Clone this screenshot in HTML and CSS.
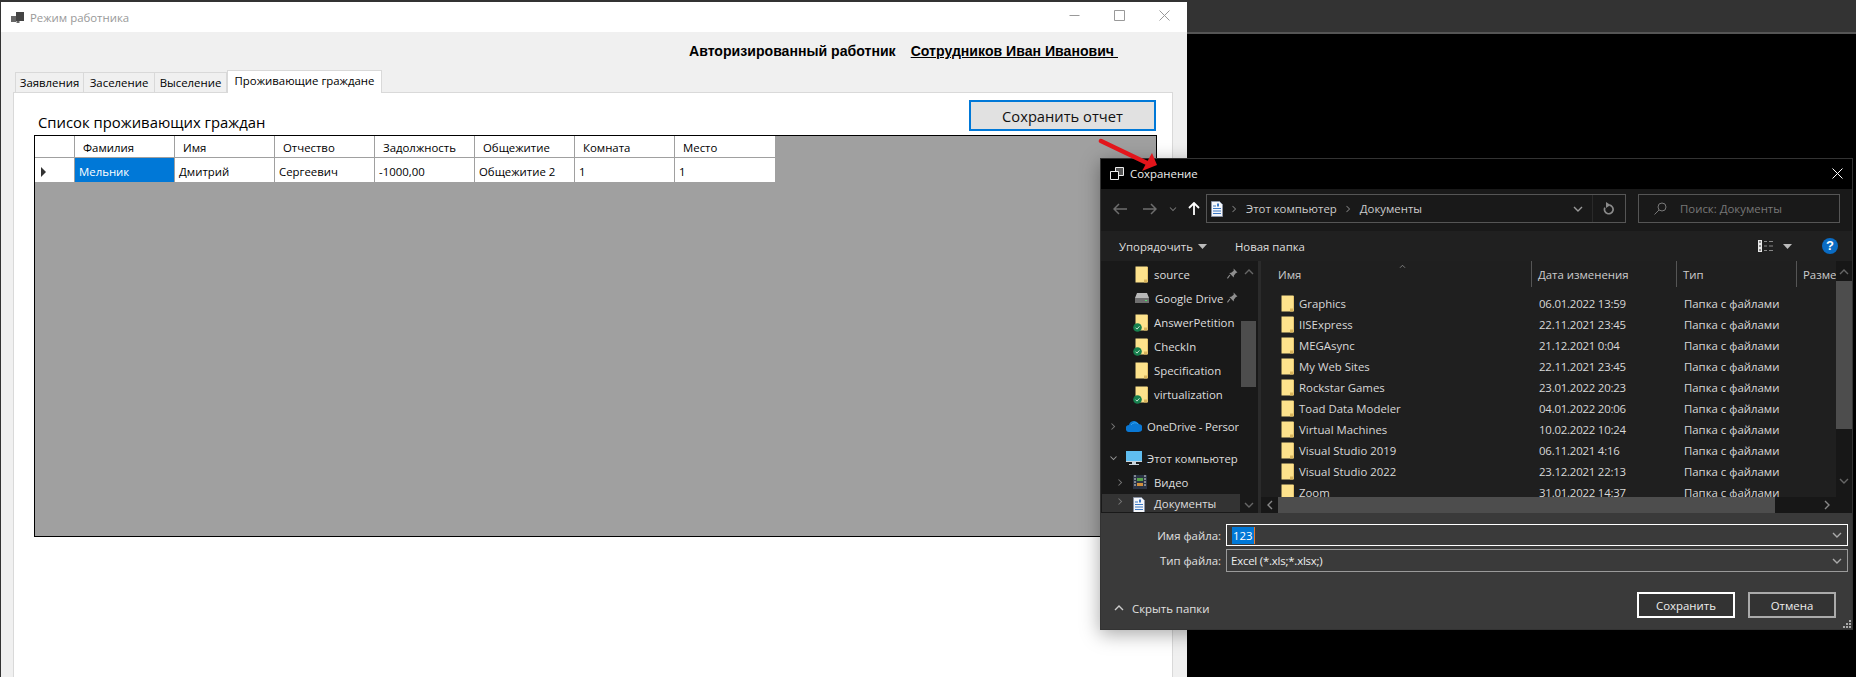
FILE: index.html
```html
<!DOCTYPE html>
<html lang="ru">
<head>
    <meta charset="UTF-8">
    <title>Режим работника</title>
    <link rel="stylesheet" href="styles.css">
</head>
<body>
    <svg class="defs" width="0" height="0">
        <symbol id="folder" viewBox="0 0 13 17">
            <path d="M0.500 0.500h12v16h-12z" fill="#fde28c"/>
            <path d="M9 16.500v-3h3.500v3z" fill="#d8b45c"/>
            <path d="M12.500 1v15" stroke="#e6c46e" fill="none"/>
        </symbol>
        <symbol id="sync" viewBox="0 0 9 9">
            <circle cx="4.500" cy="4.500" r="4.300" fill="#17804e"/>
            <path d="M2.600 4.700l1.400 1.400 2.500-2.800" stroke="#d5ecdf" stroke-width="0.900" fill="none"/>
        </symbol>
        <symbol id="doc" viewBox="0 0 12 16">
            <path d="M0.500 0.500h8l3 3v12h-11z" fill="#f4f6fa" stroke="#8a93a5"/>
            <path d="M2 5h3M2 7.500h8M2 10h8M2 12.500h8" stroke="#3b78c4"/>
            <path d="M6 2.500h2v3h-2z" fill="#3b78c4"/>
        </symbol>
        <symbol id="pin" viewBox="0 0 10 10">
            <path d="M6 0.500l3.500 3.500-1.400.6-1.800 2.300-.2 1.700-4-4 1.700-.2 2.300-1.800z" fill="#8f8f8f"/>
            <path d="M2.600 6.400l-2.200 3" stroke="#8f8f8f" fill="none"/>
        </symbol>
        <symbol id="chev-right" viewBox="0 0 8 10">
            <path d="M2 1l4 4-4 4" stroke="currentColor" stroke-width="1.400" fill="none"/>
        </symbol>
        <symbol id="chev-left" viewBox="0 0 8 10">
            <path d="M6 1l-4 4 4 4" stroke="currentColor" stroke-width="1.400" fill="none"/>
        </symbol>
        <symbol id="chev-down" viewBox="0 0 10 8">
            <path d="M1 2l4 4 4-4" stroke="currentColor" stroke-width="1.400" fill="none"/>
        </symbol>
        <symbol id="chev-up" viewBox="0 0 10 8">
            <path d="M1 6l4-4 4 4" stroke="currentColor" stroke-width="1.400" fill="none"/>
        </symbol>
        <symbol id="caret" viewBox="0 0 9 5">
            <path d="M0 0h9l-4.500 5z" fill="currentColor"/>
        </symbol>
    </svg>

    <div class="topbar"></div>

    <!-- окно приложения -->
    <div class="window">
        <div class="win-title">
            <svg class="win-icon" width="13" height="11" viewBox="0 0 13 11">
                <path d="M5 0h8v9h-8z" fill="#444"/>
                <path d="M0 4h5v6h-5z" fill="#666"/>
                <path d="M5.500 9h3v2h-3z" fill="#666"/>
            </svg>
            <span class="win-name">Режим работника</span>
            <div class="win-controls">
                <svg width="11" height="11" viewBox="0 0 11 11"><path d="M0.500 5.500h10" stroke="#999"/></svg>
                <svg width="11" height="11" viewBox="0 0 11 11"><path d="M0.500 0.500h10v10h-10z" stroke="#999" fill="none"/></svg>
                <svg width="11" height="11" viewBox="0 0 11 11"><path d="M0.500 0.500l10 10M10.500 0.500l-10 10" stroke="#999" fill="none"/></svg>
            </div>
        </div>
        <div class="win-body">
            <div class="user-row">
                <span class="user-label">Авторизированный работник</span>
                <span class="user-name">Сотрудников Иван Иванович&nbsp;</span>
            </div>
            <div class="tabs">
                <div class="tab tab-1">Заявления</div>
                <div class="tab tab-2">Заселение</div>
                <div class="tab tab-3">Выселение</div>
                <div class="tab tab-active">Проживающие граждане</div>
            </div>
            <div class="panel">
                <div class="panel-head">
                    <span class="panel-label">Список проживающих граждан</span>
                    <button class="save-report">Сохранить отчет</button>
                </div>
                <div class="grid-view">
                    <div class="grid-table">
                        <div class="cell head corner"></div>
                        <div class="cell head">Фамилия</div>
                        <div class="cell head">Имя</div>
                        <div class="cell head">Отчество</div>
                        <div class="cell head">Задолжность</div>
                        <div class="cell head">Общежитие</div>
                        <div class="cell head">Комната</div>
                        <div class="cell head">Место</div>
                        <div class="cell row-marker"><span class="marker"></span></div>
                        <div class="cell selected">Мельник</div>
                        <div class="cell">Дмитрий</div>
                        <div class="cell">Сергеевич</div>
                        <div class="cell">-1000,00</div>
                        <div class="cell">Общежитие 2</div>
                        <div class="cell">1</div>
                        <div class="cell">1</div>
                    </div>
                </div>
            </div>
        </div>
    </div>

    <!-- диалог сохранения -->
    <div class="dialog">
        <div class="dlg-title">
            <svg class="dlg-icon" width="14" height="13" viewBox="0 0 14 13">
                <path d="M5.500 0.500h8v8h-8z" stroke="#eee" fill="#555"/>
                <path d="M0.500 4.500h8v8h-8z" stroke="#eee" fill="#000"/>
            </svg>
            <span>Сохранение</span>
            <svg class="dlg-close" width="11" height="11" viewBox="0 0 11 11"><path d="M0.500 0.500l10 10M10.500 0.500l-10 10" stroke="#fff" fill="none"/></svg>
        </div>

        <div class="nav-row">
            <svg class="nav-back" width="14" height="12" viewBox="0 0 14 12"><path d="M6 1l-5 5 5 5M1 6h13" stroke="#6d6d6d" stroke-width="1.500" fill="none"/></svg>
            <svg class="nav-forward" width="14" height="12" viewBox="0 0 14 12"><path d="M8 1l5 5-5 5M0 6h13" stroke="#6d6d6d" stroke-width="1.500" fill="none"/></svg>
            <svg class="nav-drop" width="8" height="6"><use href="#chev-down"/></svg>
            <svg class="nav-up" width="12" height="13" viewBox="0 0 12 13"><path d="M1 6l5-5 5 5M6 1v12" stroke="#fff" stroke-width="1.800" fill="none"/></svg>
            <div class="address">
                <svg class="addr-doc" width="12" height="16"><use href="#doc"/></svg>
                <svg class="addr-chev" width="6" height="8"><use href="#chev-right"/></svg>
                <span>Этот компьютер</span>
                <svg class="addr-chev" width="6" height="8"><use href="#chev-right"/></svg>
                <span>Документы</span>
                <svg class="addr-drop" width="10" height="8"><use href="#chev-down"/></svg>
                <div class="addr-refresh">
                    <svg width="12" height="13" viewBox="0 0 12 13"><path d="M6.500 3.200a4.300 4.300 0 1 1-4.600 2.400" stroke="#8a8a8a" stroke-width="1.700" fill="none"/><path d="M3 0l4.500 3-4.500 3z" fill="#8a8a8a"/></svg>
                </div>
            </div>
            <div class="search">
                <svg width="13" height="13" viewBox="0 0 13 13"><circle cx="8" cy="5" r="4" stroke="#777" fill="none"/><path d="M5 8l-4.500 4.500" stroke="#777" fill="none"/></svg>
                <span>Поиск: Документы</span>
            </div>
        </div>

        <div class="tool-row">
            <span class="tool-sort">Упорядочить</span>
            <svg class="tool-caret" width="9" height="5"><use href="#caret"/></svg>
            <span class="tool-new">Новая папка</span>
            <svg class="tool-view" width="16" height="12" viewBox="0 0 16 12">
                <path d="M0 0h4v12h-4z" fill="#e8e8e8"/>
                <path d="M1 2h2M1 6h2M1 10h2" stroke="#333"/>
                <path d="M6 1.500h3M11 1.500h4M6 6h3M11 6h4M6 10.500h3M11 10.500h4" stroke="#888"/>
            </svg>
            <svg class="tool-caret tool-caret-view" width="9" height="5"><use href="#caret"/></svg>
            <span class="help">?</span>
        </div>

        <div class="main">
            <div class="tree-pane">
                <div class="tree">
                    <div class="tree-row sub"><svg class="ti" width="13" height="17"><use href="#folder"/></svg><span>source</span><svg class="pin" width="11" height="11"><use href="#pin"/></svg></div>
                    <div class="tree-row sub">
                        <svg class="ti" width="14" height="10" viewBox="0 0 14 10"><path d="M2 0h10l2 5v5h-14v-5z" fill="#b9b9b9"/><path d="M0 5h14v5h-14z" fill="#6f6f6f"/><path d="M10 7h2v1h-2z" fill="#4fdc6a"/></svg>
                        <span>Google Drive</span><svg class="pin" width="11" height="11"><use href="#pin"/></svg>
                    </div>
                    <div class="tree-row sub"><span class="ti badged"><svg width="13" height="17"><use href="#folder"/></svg><svg class="badge" width="9" height="9"><use href="#sync"/></svg></span><span>AnswerPetition</span></div>
                    <div class="tree-row sub"><span class="ti badged"><svg width="13" height="17"><use href="#folder"/></svg><svg class="badge" width="9" height="9"><use href="#sync"/></svg></span><span>CheckIn</span></div>
                    <div class="tree-row sub"><svg class="ti" width="13" height="17"><use href="#folder"/></svg><span>Specification</span></div>
                    <div class="tree-row sub"><span class="ti badged"><svg width="13" height="17"><use href="#folder"/></svg><svg class="badge" width="9" height="9"><use href="#sync"/></svg></span><span>virtualization</span></div>
                    <div class="tree-row top gap">
                        <svg class="exp" width="6" height="9"><use href="#chev-right"/></svg>
                        <svg class="ti-top" width="16" height="11" viewBox="0 0 16 11"><path d="M3.500 11a3.500 3.500 0 0 1-.5-7 5 5 0 0 1 9.500-1 4 4 0 0 1 0 8z" fill="#0a78d4"/><path d="M5 4a5 5 0 0 1 7.500-1" stroke="#35a4ee" fill="none"/></svg>
                        <span class="clip">OneDrive - Persor</span>
                    </div>
                    <div class="tree-row top gap">
                        <svg class="exp-down" width="9" height="6"><use href="#chev-down"/></svg>
                        <svg class="ti-top" width="16" height="14" viewBox="0 0 16 14"><path d="M0 0h16v10h-16z" fill="#5fbdf0"/><path d="M0 10h16v1h-16zM6 11h4v2h-4zM3 13h10v1h-10z" fill="#c9d3da"/></svg>
                        <span>Этот компьютер</span>
                    </div>
                    <div class="tree-row sub2">
                        <svg class="exp" width="6" height="9"><use href="#chev-right"/></svg>
                        <svg class="ti2" width="14" height="14" viewBox="0 0 14 14"><path d="M0 0h14v14h-14z" fill="#2b3445"/><path d="M4 3h6v3h-6z" fill="#58a24b"/><path d="M4 8h6v3h-6z" fill="#d18f3c"/><path d="M1 1h2M1 4h2M1 7h2M1 10h2M11 1h2M11 4h2M11 7h2M11 10h2" stroke="#ddd"/></svg>
                        <span>Видео</span>
                    </div>
                    <div class="tree-row sub2 current">
                        <svg class="exp" width="6" height="9"><use href="#chev-right"/></svg>
                        <svg class="ti2" width="12" height="16"><use href="#doc"/></svg>
                        <span>Документы</span>
                    </div>
                </div>
                <div class="scroll-v tree-scroll">
                    <svg width="10" height="8"><use href="#chev-up"/></svg>
                    <div class="thumb-slot"><div class="thumb"></div></div>
                    <svg width="10" height="8"><use href="#chev-down"/></svg>
                </div>
            </div>
            <div class="list-pane">
                <div class="list-inner">
                    <div class="list-head">
                        <span class="sort-mark"><svg width="9" height="5"><use href="#chev-up"/></svg></span>
                        <div class="col-name">Имя</div>
                        <div class="col-date">Дата изменения</div>
                        <div class="col-type">Тип</div>
                        <div class="col-size">Разме</div>
                    </div>
                    <div class="files">
                        <div class="file"><span class="f-name"><svg width="13" height="17"><use href="#folder"/></svg>Graphics</span><span class="f-date">06.01.2022 13:59</span><span class="f-type">Папка с файлами</span></div>
                        <div class="file"><span class="f-name"><svg width="13" height="17"><use href="#folder"/></svg>IISExpress</span><span class="f-date">22.11.2021 23:45</span><span class="f-type">Папка с файлами</span></div>
                        <div class="file"><span class="f-name"><svg width="13" height="17"><use href="#folder"/></svg>MEGAsync</span><span class="f-date">21.12.2021 0:04</span><span class="f-type">Папка с файлами</span></div>
                        <div class="file"><span class="f-name"><svg width="13" height="17"><use href="#folder"/></svg>My Web Sites</span><span class="f-date">22.11.2021 23:45</span><span class="f-type">Папка с файлами</span></div>
                        <div class="file"><span class="f-name"><svg width="13" height="17"><use href="#folder"/></svg>Rockstar Games</span><span class="f-date">23.01.2022 20:23</span><span class="f-type">Папка с файлами</span></div>
                        <div class="file"><span class="f-name"><svg width="13" height="17"><use href="#folder"/></svg>Toad Data Modeler</span><span class="f-date">04.01.2022 20:06</span><span class="f-type">Папка с файлами</span></div>
                        <div class="file"><span class="f-name"><svg width="13" height="17"><use href="#folder"/></svg>Virtual Machines</span><span class="f-date">10.02.2022 10:24</span><span class="f-type">Папка с файлами</span></div>
                        <div class="file"><span class="f-name"><svg width="13" height="17"><use href="#folder"/></svg>Visual Studio 2019</span><span class="f-date">06.11.2021 4:16</span><span class="f-type">Папка с файлами</span></div>
                        <div class="file"><span class="f-name"><svg width="13" height="17"><use href="#folder"/></svg>Visual Studio 2022</span><span class="f-date">23.12.2021 22:13</span><span class="f-type">Папка с файлами</span></div>
                        <div class="file"><span class="f-name"><svg width="13" height="17"><use href="#folder"/></svg>Zoom</span><span class="f-date">31.01.2022 14:37</span><span class="f-type">Папка с файлами</span></div>
                    </div>
                    <div class="scroll-h">
                        <svg width="8" height="10"><use href="#chev-left"/></svg>
                        <div class="h-slot"><div class="h-thumb"></div></div>
                        <svg width="8" height="10"><use href="#chev-right"/></svg>
                    </div>
                </div>
                <div class="scroll-v list-scroll">
                    <svg width="10" height="8"><use href="#chev-up"/></svg>
                    <div class="thumb-slot"><div class="thumb"></div></div>
                    <svg width="10" height="8"><use href="#chev-down"/></svg>
                </div>
            </div>
        </div>

        <div class="bottom">
            <div class="field">
                <label>Имя файла:</label>
                <div class="combo combo-focus"><span class="sel">123</span><span class="text-caret"></span><svg width="10" height="8"><use href="#chev-down"/></svg></div>
            </div>
            <div class="field">
                <label>Тип файла:</label>
                <div class="combo"><span class="type-value">Excel (*.xls;*.xlsx;)</span><svg width="10" height="8"><use href="#chev-down"/></svg></div>
            </div>
            <div class="actions">
                <div class="hide-folders"><svg width="10" height="8"><use href="#chev-up"/></svg><span>Скрыть папки</span></div>
                <button class="dlg-btn dlg-default">Сохранить</button>
                <button class="dlg-btn">Отмена</button>
            </div>
            <svg class="grip" width="9" height="9" viewBox="0 0 9 9"><path d="M6 0h2v2h-2zM3 3h2v2h-2zM6 3h2v2h-2zM0 6h2v2h-2zM3 6h2v2h-2zM6 6h2v2h-2z" fill="#aaa"/></svg>
        </div>
    </div>

    <!-- красная стрелка поверх скриншота -->
    <svg class="arrow" width="70" height="36" viewBox="0 0 70 36">
        <path d="M3 3l46 22" stroke="#e3151b" stroke-width="4.500" stroke-linecap="round" fill="none"/>
        <path d="M59 27l-5-12-10 18z" fill="#e3151b"/>
    </svg>
</body>
</html>
```

FILE: styles.css
```css
* {
    box-sizing: border-box;
}

html, body {
    margin: 0;
    height: 100%;
}

body {
    position: relative;
    overflow: hidden;
    background-color: #000;
    font-family: "Open Sans", "Noto Sans", sans-serif;
    font-size: 11.4px;
    color: #000;
}

.defs {
    position: absolute;
}

.topbar {
    height: 34px;
    background-color: #333;
    border-bottom: 2px solid #555;
}

button {
    font-family: inherit;
    padding: 0;
}

/* Окно приложения */
.window {
    position: absolute;
    left: 0;
    top: 2px;
    width: 1187px;
    height: 690px;
    border-left: 1px solid #333;
    display: flex;
    flex-direction: column;
    background-color: #f0f0f0;
}

.win-title {
    height: 30px;
    flex-shrink: 0;
    background-color: #fff;
    display: flex;
    align-items: center;
    padding-left: 10px;
}

.win-icon {
    margin-right: 6px;
}

.win-name {
    color: #999;
}

.win-controls {
    margin-left: auto;
    display: flex;
    gap: 34px;
    margin-right: 17px;
    margin-top: -4px;
}

.win-body {
    flex: 1;
    display: flex;
    flex-direction: column;
    padding-left: 12px;
    padding-right: 14px;
}

.user-row {
    height: 37px;
    padding-top: 12px;
    padding-left: 676px;
    display: flex;
    gap: 15px;
    font-family: "Liberation Sans", sans-serif;
    font-weight: bold;
    font-size: 14.1px;
    line-height: 15px;
    white-space: nowrap;
}

.user-name {
    text-decoration: underline;
}

.tabs {
    display: flex;
    align-items: flex-end;
    height: 23px;
    padding-left: 2px;
}

.tab {
    height: 20px;
    background-color: #f0f0f0;
    border: 1px solid #d9d9d9;
    border-bottom: none;
    border-left: none;
    text-align: center;
    line-height: 19px;
    white-space: nowrap;
}

.tab-1 {
    width: 69px;
    border-left: 1px solid #d9d9d9;
}

.tab-2 {
    width: 71px;
}

.tab-3 {
    width: 72px;
}

.tab-active {
    width: 155px;
    height: 23px;
    background-color: #fff;
    line-height: 20px;
    border-left: 1px solid #d9d9d9;
    margin-bottom: -1px;
    position: relative;
    z-index: 1;
}

.panel {
    flex: 1;
    background-color: #fff;
    border: 1px solid #d9d9d9;
    padding: 7px 16px 0 20px;
}

.panel-head {
    display: flex;
    justify-content: space-between;
    height: 35px;
}

.panel-label {
    font-size: 14.85px;
    line-height: 20px;
    margin-top: 12px;
    margin-left: 4px;
}

.save-report {
    width: 187px;
    height: 31px;
    background-color: #e1e1e1;
    border: 2px solid #0078d7;
    font-size: 14.7px;
    color: #111;
}

.grid-view {
    width: 1123px;
    height: 402px;
    background-color: #a0a0a0;
    border: 1px solid #000;
}

.grid-table {
    display: grid;
    grid-template-columns: 40px repeat(7, 100px);
    grid-template-rows: 22px 25px;
    width: 740px;
}

.cell {
    background-color: #fff;
    border-right: 1px solid #a0a0a0;
    border-bottom: 1px solid #a0a0a0;
    padding-left: 4px;
    line-height: 27px;
    white-space: nowrap;
}

.cell:nth-child(8n) {
    border-right: none;
}

.cell.head {
    line-height: 23px;
    padding-left: 8px;
}

.cell.head.corner {
    padding: 0;
}

.row-marker {
    position: relative;
    padding: 0;
}

.marker {
    position: absolute;
    left: 6px;
    top: 9px;
    border-left: 5px solid #333;
    border-top: 5px solid transparent;
    border-bottom: 5px solid transparent;
}

.cell.selected {
    background-color: #0078d7;
    color: #fff;
}

/* Диалог сохранения */
.dialog {
    position: absolute;
    left: 1100px;
    top: 158px;
    width: 753px;
    height: 472px;
    background-color: #1a1a1a;
    border: 1px solid #333;
    box-shadow: 0 4px 18px rgba(0, 0, 0, 0.35);
    display: flex;
    flex-direction: column;
    color: #ddd;
}

.dlg-title {
    height: 30px;
    flex-shrink: 0;
    background-color: #000;
    color: #eee;
    display: flex;
    align-items: center;
    padding-left: 9px;
    padding-bottom: 2px;
}

.dlg-icon {
    margin-right: 6px;
}

.dlg-close {
    margin-left: auto;
    margin-right: 9px;
}

.nav-row {
    height: 42px;
    flex-shrink: 0;
    display: flex;
    align-items: center;
    background-color: #191919;
    color: #777;
    padding-bottom: 3px;
}

.nav-back {
    margin-left: 12px;
}

.nav-forward {
    margin-left: 16px;
}

.nav-drop {
    margin-left: 12px;
}

.nav-up {
    margin-left: 11px;
}

.address {
    margin-left: 6px;
    width: 420px;
    height: 29px;
    border: 1px solid #555;
    display: flex;
    align-items: center;
    color: #ccc;
}

.addr-doc {
    margin-left: 4px;
}

.addr-chev {
    margin: 0 9px 0 8px;
    color: #777;
}

.addr-drop {
    margin-left: auto;
    color: #999;
    margin-right: 9px;
}

.addr-refresh {
    width: 33px;
    height: 100%;
    border-left: 1px solid #2a2a2a;
    display: flex;
    align-items: center;
    justify-content: center;
}

.search {
    margin-left: 12px;
    width: 202px;
    height: 29px;
    border: 1px solid #555;
    display: flex;
    align-items: center;
    padding-left: 15px;
    gap: 13px;
    color: #777;
}

.tool-row {
    height: 30px;
    flex-shrink: 0;
    display: flex;
    align-items: center;
    background-color: #202020;
    color: #ddd;
}

.tool-sort {
    margin-left: 18px;
}

.tool-caret {
    color: #bbb;
    margin-left: 5px;
}

.tool-new {
    margin-left: 28px;
}

.tool-view {
    margin-left: auto;
}

.tool-caret-view {
    margin-left: 9px;
}

.help {
    width: 16px;
    height: 16px;
    margin: 0 14px 0 30px;
    border-radius: 50%;
    background-color: #0a6cc4;
    color: #fff;
    font-family: "Liberation Sans", sans-serif;
    font-weight: bold;
    font-size: 13px;
    line-height: 16px;
    text-align: center;
}

.main {
    flex: 1;
    min-height: 0;
    display: flex;
    background-color: #1f1f1f;
}

.tree-pane {
    width: 160px;
    flex-shrink: 0;
    display: flex;
    background-color: #191919;
    border-right: 3px solid #2b2b2b;
}

.tree {
    width: 139px;
    padding-top: 1px;
    overflow: hidden;
}

.tree-row {
    height: 24px;
    display: flex;
    align-items: center;
    white-space: nowrap;
    position: relative;
}

.tree-row.sub {
    padding-left: 34px;
}

.tree-row.sub2 {
    padding-left: 16px;
}

.tree-row.top {
    padding-left: 9px;
}

.tree-row.sub:nth-child(6) {
    margin-bottom: 8px;
}

.tree-row.top:nth-child(7) {
    margin-bottom: 8px;
}

.tree-row.current {
    background-color: #333;
    margin-left: 1px;
    padding-left: 15px;
    height: 18px;
    align-items: flex-start;
    overflow: hidden;
}

.tree-row.current > span,
.tree-row.current > svg {
    margin-top: 3px;
}

.tree-row.current > span {
    margin-top: 2px;
    margin-left: 2px;
}

.ti {
    margin-right: 6px;
    flex-shrink: 0;
}

.badged {
    position: relative;
    width: 13px;
    height: 17px;
    display: block;
}

.badged svg {
    display: block;
}

.badge {
    position: absolute;
    left: -2px;
    bottom: -1px;
}

.pin {
    position: absolute;
    left: 126px;
    top: 6px;
}

.exp {
    color: #777;
    margin-right: 10px;
}

.exp-down {
    color: #999;
    margin-right: 8px;
    margin-left: -1px;
}

.ti-top {
    margin-right: 5px;
}

.ti2 {
    margin-right: 7px;
}

.clip {
    overflow: hidden;
    letter-spacing: -0.15px;
}

.scroll-v {
    width: 15px;
    display: flex;
    flex-direction: column;
    align-items: center;
    color: #666;
    padding: 7px 0 4px;
}

.thumb-slot {
    flex: 1;
    width: 100%;
    position: relative;
}

.tree-scroll {
    margin-left: 1px;
}

.tree-scroll .thumb {
    position: absolute;
    top: 45px;
    left: 0;
    width: 100%;
    height: 66px;
    background-color: #4d4d4d;
}

.list-pane {
    flex: 1;
    display: flex;
    min-width: 0;
}

.list-inner {
    flex: 1;
    min-width: 0;
    display: flex;
    flex-direction: column;
    position: relative;
}

.list-head {
    height: 26px;
    flex-shrink: 0;
    display: grid;
    grid-template-columns: 271px 145px 120px 1fr;
    position: relative;
    color: #ccc;
    line-height: 28px;
    overflow: hidden;
}

.sort-mark {
    position: absolute;
    left: 137px;
    top: 1px;
    color: #888;
    line-height: 5px;
}

.col-name,
.col-date,
.col-type,
.col-size {
    border-right: 1px solid #555;
    padding-left: 6px;
    white-space: nowrap;
}

.col-name {
    padding-left: 17px;
}

.col-size {
    border-right: none;
}

.files {
    flex: 1;
    min-height: 0;
    overflow: hidden;
    padding-top: 6px;
}

.file {
    height: 21px;
    display: grid;
    grid-template-columns: 271px 145px 1fr;
    line-height: 21px;
    color: #d8d8d8;
}

.f-name {
    display: flex;
    align-items: center;
    gap: 5px;
    padding-left: 20px;
}

.f-date,
.f-type {
    padding-left: 7px;
}

.f-date {
    letter-spacing: -0.2px;
}

.scroll-h {
    height: 16px;
    flex-shrink: 0;
    background-color: #171717;
    display: flex;
    align-items: center;
    padding: 0 5px;
    color: #888;
}

.h-slot {
    flex: 1;
    height: 100%;
    padding-left: 4px;
    padding-right: 48px;
}

.h-thumb {
    height: 100%;
    background-color: #4d4d4d;
}

.list-scroll {
    width: 16px;
    background-color: #171717;
    padding-bottom: 28px;
}

.list-scroll .thumb {
    position: absolute;
    top: 5px;
    left: 0;
    width: 100%;
    height: 148px;
    background-color: #4d4d4d;
}

.bottom {
    height: 116px;
    flex-shrink: 0;
    background-color: #3a3a3a;
    padding-top: 11px;
    position: relative;
}

.field {
    display: flex;
    align-items: center;
    margin-bottom: 3px;
}

.field label {
    width: 120px;
    text-align: right;
    color: #e0e0e0;
}

.combo {
    margin-left: 5px;
    width: 622px;
    height: 23px;
    border: 1px solid #9a9a9a;
    display: flex;
    align-items: center;
    padding-left: 4px;
    padding-right: 5px;
    color: #eee;
}

.combo svg {
    margin-left: auto;
    color: #aaa;
}

.combo-focus {
    height: 22px;
    border-color: #fff;
    padding-left: 5px;
}

.type-value {
    letter-spacing: -0.2px;
}

.sel {
    background-color: #0078d7;
    color: #fff;
    line-height: 17px;
    padding: 0 1px;
}

.text-caret {
    width: 1px;
    height: 17px;
    background-color: #e87a2b;
}

.actions {
    display: flex;
    align-items: center;
    margin-top: 20px;
    padding-right: 16px;
}

.hide-folders {
    display: flex;
    align-items: center;
    gap: 8px;
    margin-left: 13px;
    margin-right: auto;
    margin-top: 6px;
    color: #e0e0e0;
}

.hide-folders svg {
    color: #ccc;
}

.dlg-btn {
    width: 88px;
    height: 26px;
    background-color: #333;
    border: 2px solid #aaa;
    color: #eee;
    font-size: 11.4px;
}

.dlg-default {
    width: 98px;
    border-color: #fff;
    margin-right: 13px;
}

.grip {
    position: absolute;
    right: 0;
    bottom: 0;
}

.arrow {
    position: absolute;
    left: 1098px;
    top: 138px;
}
```
